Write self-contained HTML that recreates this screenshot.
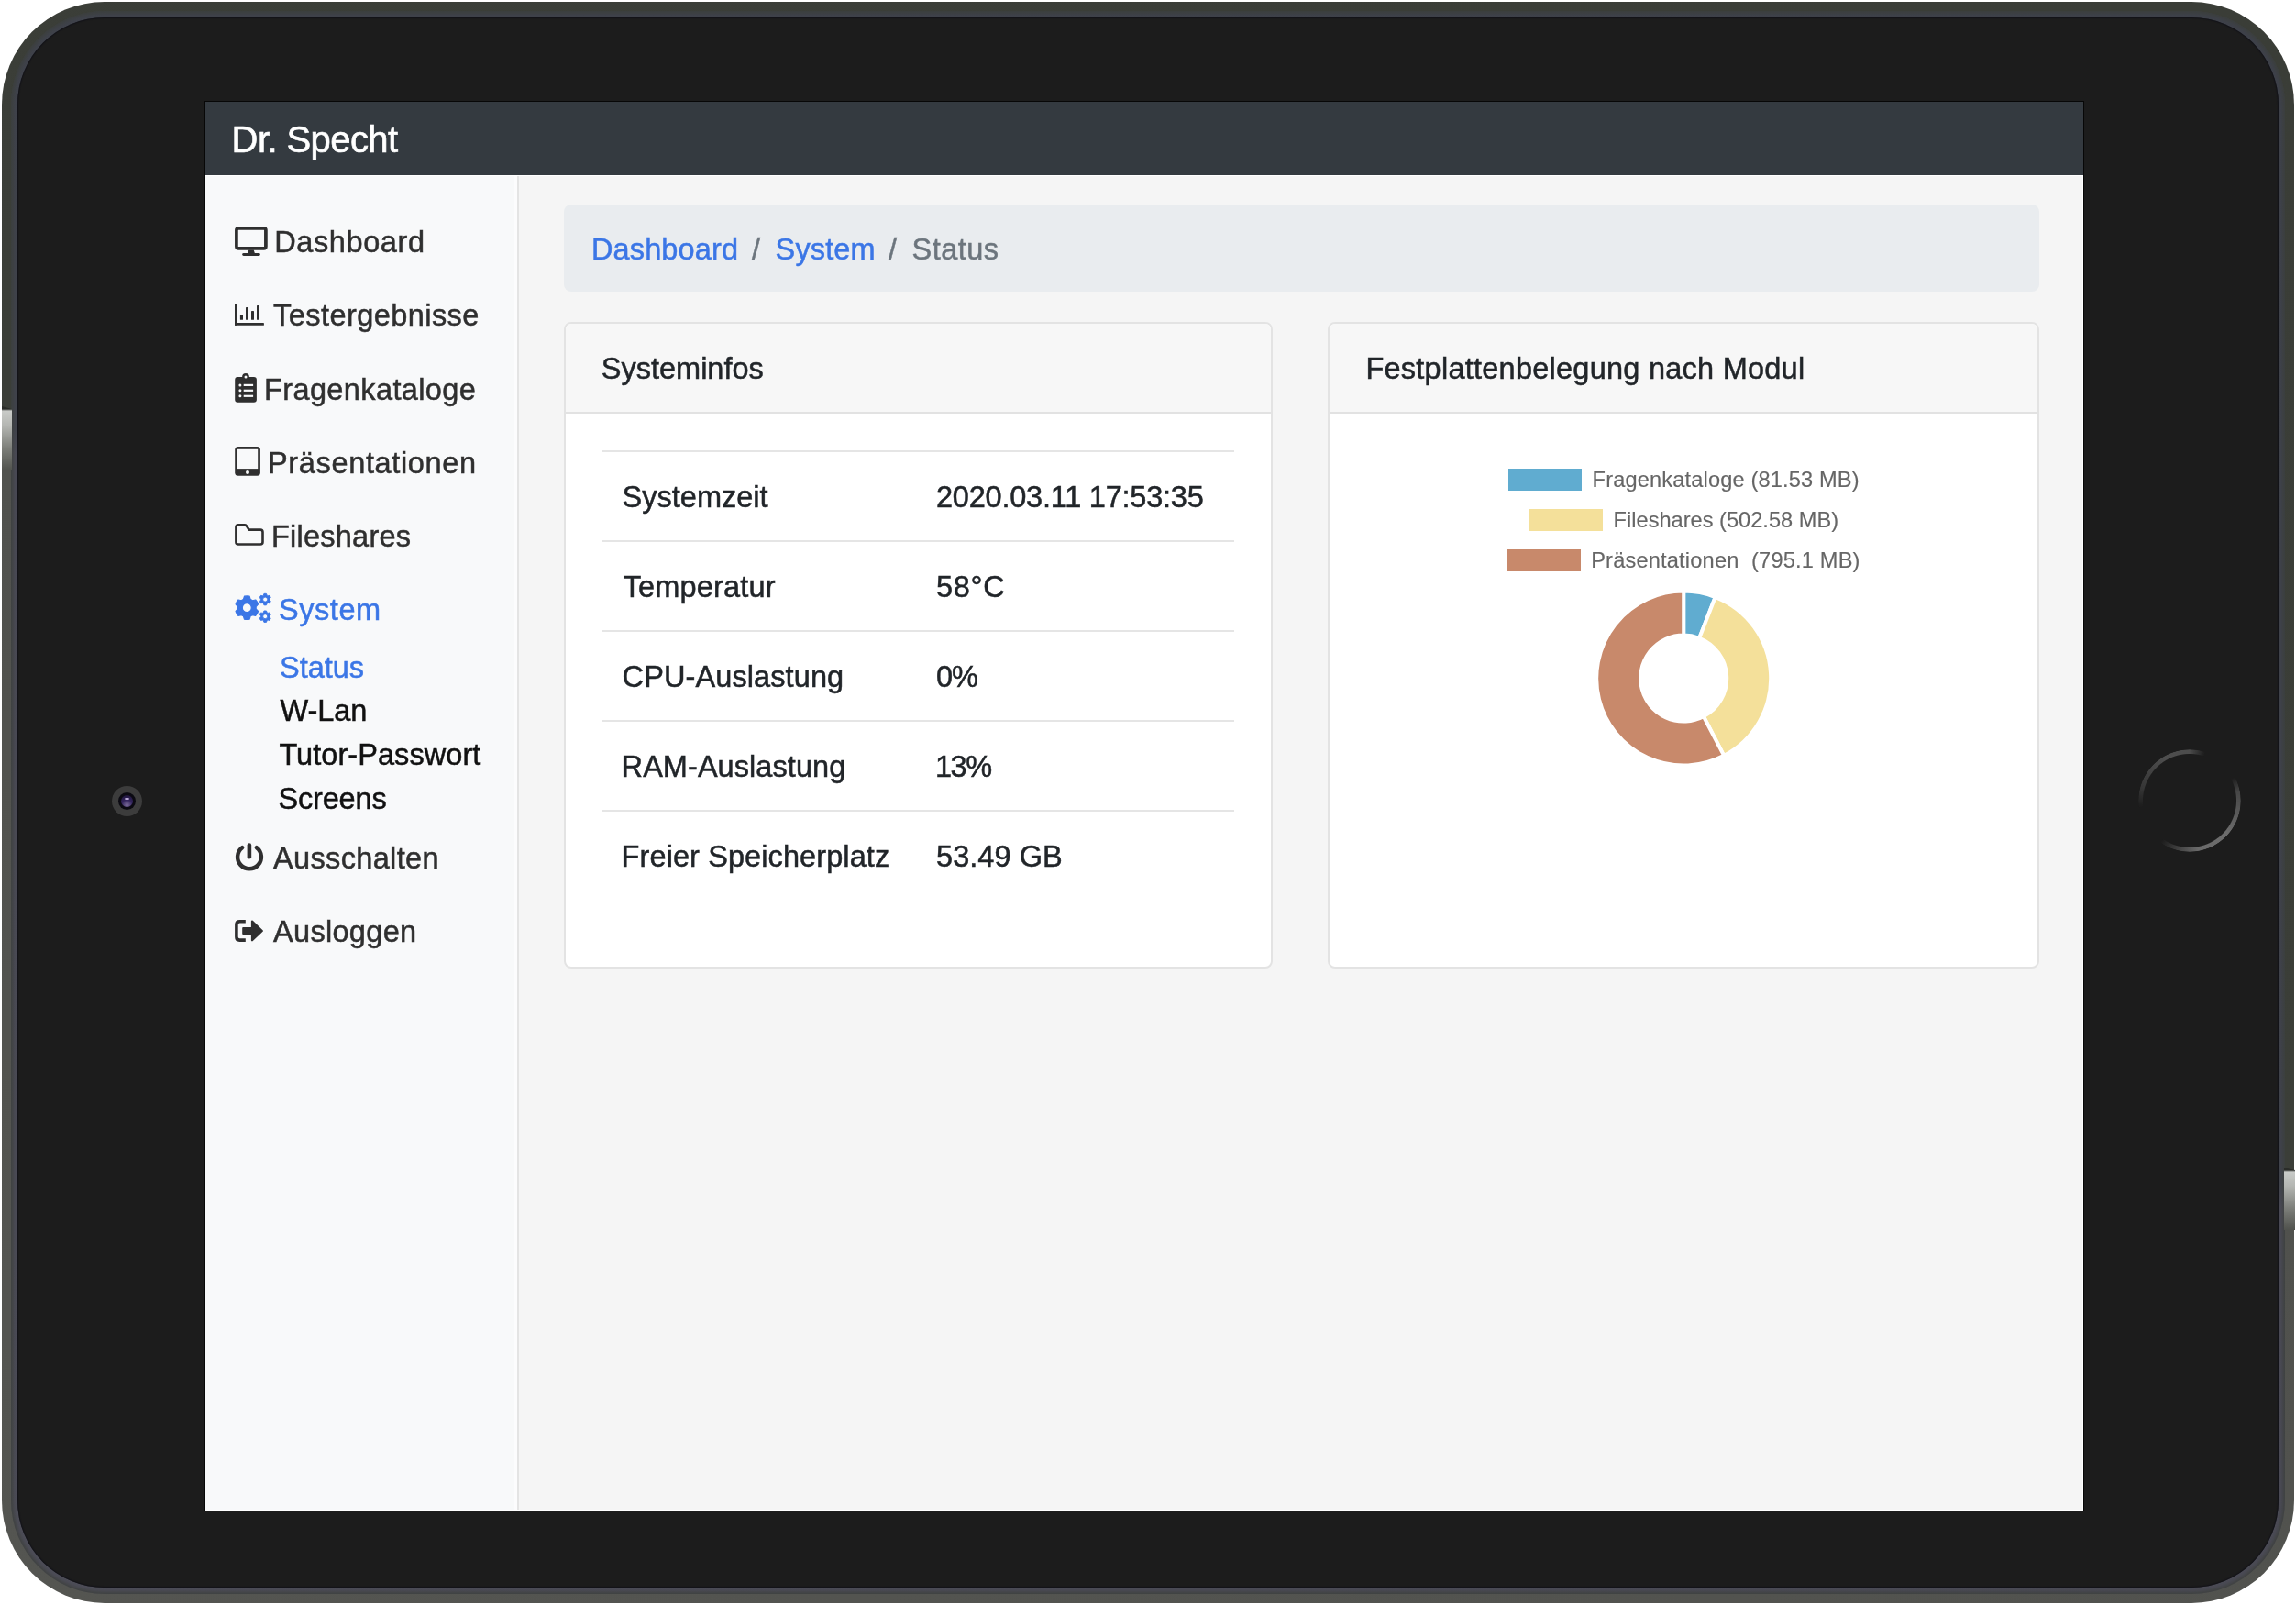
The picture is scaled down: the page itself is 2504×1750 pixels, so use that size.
<!DOCTYPE html>
<html><head><meta charset="utf-8">
<style>
html,body{margin:0;padding:0;}
body{width:2504px;height:1750px;position:relative;overflow:hidden;background:#fff;font-family:"Liberation Sans", sans-serif;}
.a{position:absolute;}
.t{position:absolute;white-space:pre;font-family:"Liberation Sans", sans-serif;}
</style></head><body>

<div class="a" style="left:2px;top:2px;width:2500px;height:1746px;border-radius:112px;background:linear-gradient(198.4deg,#3a3d37 0%,#3b3e38 50.2%,#50514d 51.2%,#545551 100%);"></div>
<div class="a" style="left:12px;top:12px;width:2480px;height:1726px;border-radius:102px;background:linear-gradient(198.4deg,#3e414a 0%,#40434c 50.2%,#4a4a55 51.2%,#4d4d58 100%);box-shadow:inset 0 0 4px 2px rgba(59,62,56,0.85);"></div>
<div class="a" style="left:19px;top:19px;width:2466px;height:1712px;border-radius:95px;background:#1c1c1c;box-shadow:inset 0 0 1px 1px rgba(18,18,24,0.9);"></div>
<div class="a" style="left:2px;top:443px;width:11px;height:70px;clip-path:polygon(0 0,100% 3px,100% 100%,0 100%);background:linear-gradient(to bottom,#2a2c28 0px,#2a2c28 3px,#c9cbc8 5px,#b4b6b2 30%,#7d7f7a 65%,#50524d 100%);"></div>
<div class="a" style="left:2491px;top:1273px;width:12px;height:68px;clip-path:polygon(0 0,100% 3px,100% 100%,0 100%);background:linear-gradient(to bottom,#2a2c28 0px,#2a2c28 3px,#c9cbc8 5px,#b4b6b2 30%,#7d7f7a 65%,#50524d 100%);"></div>
<div class="a" style="left:2332px;top:817px;width:112px;height:112px;border-radius:50%;
 background:conic-gradient(from 0deg, rgba(76,76,76,1) 0deg, rgba(76,76,76,0) 18deg, rgba(0,0,0,0) 62deg, rgba(100,100,100,0.6) 80deg, #6c6c6c 130deg, #6a6a6a 170deg, rgba(100,100,100,0) 215deg, rgba(0,0,0,0) 262deg, rgba(72,72,72,0.6) 285deg, #4e4e4e 330deg, rgba(76,76,76,1) 360deg);
 -webkit-mask:radial-gradient(circle closest-side, transparent 50.5px, #000 51.5px, #000 55.2px, transparent 56.2px);mask:radial-gradient(circle closest-side, transparent 50.5px, #000 51.5px, #000 55.2px, transparent 56.2px);"></div>
<div class="a" style="left:122px;top:857px;width:33px;height:33px;border-radius:50%;background:#3c3c3c;"></div>
<div class="a" style="left:129px;top:864px;width:19px;height:19px;border-radius:50%;background:#0b0a12;"></div>
<div class="a" style="left:132px;top:867px;width:13px;height:13px;border-radius:50%;background:radial-gradient(circle at 50% 85%, #7d6d9c 0%, #34255e 45%, #1a1133 100%);"></div>
<div class="a" style="left:136px;top:870px;width:5px;height:2px;border-radius:50%;background:#cdbdea;"></div>

<div class="a" style="left:223px;top:110px;width:2050px;height:1538px;background:#070707;"></div>
<div class="a" style="left:224px;top:111px;width:2048px;height:1536px;background:#f5f5f5;overflow:hidden;"></div>
<div class="a" style="left:224px;top:111px;width:2048px;height:80px;background:#343a40;"></div>
<div class="a" style="left:224px;top:191px;width:2048px;height:1px;background:#ffffff;"></div>
<div class="a" style="left:224px;top:192px;width:340px;height:1455px;background:#f8f9fa;"></div>
<div class="a" style="left:561px;top:192px;width:3px;height:1455px;background:#fcfcfd;"></div>
<div class="a" style="left:564px;top:192px;width:2px;height:1455px;background:#e4e4e4;"></div>
<div class="a" style="left:2271px;top:192px;width:1px;height:1455px;background:#ffffff;"></div>
<div class="a" style="left:224px;top:1646px;width:2048px;height:1px;background:#ffffff;"></div>
<div class="a" style="left:615px;top:223px;width:1609px;height:95px;border-radius:8px;background:#e9ecef;"></div>

<div class="a" style="left:615px;top:351px;width:769px;height:701px;border:2px solid #e3e3e3;border-radius:8px;background:#fff;overflow:hidden;">
  <div class="a" style="left:0;top:0;width:100%;height:96px;background:#f7f7f7;border-bottom:2px solid #e2e2e2;"></div>
</div>
<div class="a" style="left:1448px;top:351px;width:772px;height:701px;border:2px solid #e3e3e3;border-radius:8px;background:#fff;overflow:hidden;">
  <div class="a" style="left:0;top:0;width:100%;height:96px;background:#f7f7f7;border-bottom:2px solid #e2e2e2;"></div>
</div><div class="a" style="left:656px;top:491px;width:690px;height:2px;background:#e5e5e5;"></div>
<div class="a" style="left:656px;top:589px;width:690px;height:2px;background:#e5e5e5;"></div>
<div class="a" style="left:656px;top:687px;width:690px;height:2px;background:#e5e5e5;"></div>
<div class="a" style="left:656px;top:785px;width:690px;height:2px;background:#e5e5e5;"></div>
<div class="a" style="left:656px;top:883px;width:690px;height:2px;background:#e5e5e5;"></div>
<div class="a" style="left:1645px;top:511px;width:80px;height:24px;background:#60acd0;"></div>
<div class="a" style="left:1668px;top:555px;width:80px;height:24px;background:#f4e09a;"></div>
<div class="a" style="left:1644px;top:599px;width:80px;height:24px;background:#c8896b;"></div>
<svg class="a" style="left:0;top:0" width="2504" height="1750" viewBox="0 0 2504 1750"><rect x="257.9" y="248.85" width="32" height="22" rx="2.2" fill="none" stroke="#2f2f2f" stroke-width="3.7"/><path d="M271.3 272.5 L276.7 272.5 L278 276.5 L270 276.5 Z" fill="#2f2f2f"/><rect x="264.2" y="276.1" width="19.6" height="2.8" rx="1.4" fill="#2f2f2f"/><rect x="256" y="331" width="2.80" height="23.80" rx="0.6" fill="#2f2f2f"/><rect x="256" y="352.1" width="31.90" height="2.70" rx="0.6" fill="#2f2f2f"/><rect x="261.9" y="343.1" width="3.10" height="5.70" rx="0.6" fill="#2f2f2f"/><rect x="268" y="335" width="3.00" height="13.80" rx="0.6" fill="#2f2f2f"/><rect x="274" y="339" width="3.00" height="9.80" rx="0.6" fill="#2f2f2f"/><rect x="280" y="333" width="2.90" height="15.80" rx="0.6" fill="#2f2f2f"/><rect x="256.2" y="411" width="23.7" height="27.8" rx="3" fill="#2f2f2f"/><circle cx="268" cy="410.9" r="3.9" fill="#2f2f2f"/><circle cx="268" cy="410.9" r="1.5" fill="#f8f9fa"/><circle cx="261.9" cy="419.9" r="1.5" fill="#f8f9fa"/><rect x="265.7" y="418.80" width="10.4" height="2.2" fill="#f8f9fa"/><circle cx="261.9" cy="425.8" r="1.5" fill="#f8f9fa"/><rect x="265.7" y="424.70" width="10.4" height="2.2" fill="#f8f9fa"/><circle cx="261.9" cy="431.8" r="1.5" fill="#f8f9fa"/><rect x="265.7" y="430.70" width="10.4" height="2.2" fill="#f8f9fa"/><rect x="256.2" y="486.9" width="27.7" height="31.9" rx="3.5" fill="#2f2f2f"/><rect x="259" y="489.8" width="22.2" height="21.3" fill="#f8f9fa"/><circle cx="270" cy="514.9" r="2" fill="#f8f9fa"/><path d="M259.9 572.4 L266.8 572.4 Q268 572.4 268.8 573.3 L271.6 577.6 L284 577.6 Q286.5 577.6 286.5 580.1 L286.5 591 Q286.5 593.5 284 593.5 L259.9 593.5 Q257.4 593.5 257.4 591 L257.4 574.9 Q257.4 572.4 259.9 572.4 Z" fill="none" stroke="#2f2f2f" stroke-width="2.6" stroke-linejoin="round"/><path d="M265.40 653.60 L266.50 650.21 A12.8 12.8 0 0 1 272.10 650.21 L273.20 653.60 A9.9 9.9 0 0 1 275.23 654.77 L278.72 654.03 A12.8 12.8 0 0 1 281.52 658.88 L279.13 661.53 A9.9 9.9 0 0 1 279.13 663.87 L281.52 666.52 A12.8 12.8 0 0 1 278.72 671.37 L275.23 670.63 A9.9 9.9 0 0 1 273.20 671.80 L272.10 675.19 A12.8 12.8 0 0 1 266.50 675.19 L265.40 671.80 A9.9 9.9 0 0 1 263.37 670.63 L259.88 671.37 A12.8 12.8 0 0 1 257.08 666.52 L259.47 663.87 A9.9 9.9 0 0 1 259.47 661.53 L257.08 658.88 A12.8 12.8 0 0 1 259.88 654.03 L263.37 654.77 A9.9 9.9 0 0 1 265.40 653.60 Z M274.30 662.70 A5.0 5.0 0 1 0 264.30 662.70 A5.0 5.0 0 1 0 274.30 662.70 Z" fill="#3b76e6" fill-rule="evenodd" stroke="#3b76e6" stroke-width="1.2" stroke-linejoin="round"/><path d="M287.35 649.17 L287.85 647.45 A6.3 6.3 0 0 1 290.55 647.45 L291.05 649.17 A4.8 4.8 0 0 1 292.11 649.78 L293.85 649.35 A6.3 6.3 0 0 1 295.20 651.69 L293.96 652.99 A4.8 4.8 0 0 1 293.96 654.21 L295.20 655.51 A6.3 6.3 0 0 1 293.85 657.85 L292.11 657.42 A4.8 4.8 0 0 1 291.05 658.03 L290.55 659.75 A6.3 6.3 0 0 1 287.85 659.75 L287.35 658.03 A4.8 4.8 0 0 1 286.29 657.42 L284.55 657.85 A6.3 6.3 0 0 1 283.20 655.51 L284.44 654.21 A4.8 4.8 0 0 1 284.44 652.99 L283.20 651.69 A6.3 6.3 0 0 1 284.55 649.35 L286.29 649.78 A4.8 4.8 0 0 1 287.35 649.17 Z M291.70 653.60 A2.5 2.5 0 1 0 286.70 653.60 A2.5 2.5 0 1 0 291.70 653.60 Z" fill="#3b76e6" fill-rule="evenodd" stroke="#3b76e6" stroke-width="0.9" stroke-linejoin="round"/><path d="M287.35 667.77 L287.85 666.05 A6.3 6.3 0 0 1 290.55 666.05 L291.05 667.77 A4.8 4.8 0 0 1 292.11 668.38 L293.85 667.95 A6.3 6.3 0 0 1 295.20 670.29 L293.96 671.59 A4.8 4.8 0 0 1 293.96 672.81 L295.20 674.11 A6.3 6.3 0 0 1 293.85 676.45 L292.11 676.02 A4.8 4.8 0 0 1 291.05 676.63 L290.55 678.35 A6.3 6.3 0 0 1 287.85 678.35 L287.35 676.63 A4.8 4.8 0 0 1 286.29 676.02 L284.55 676.45 A6.3 6.3 0 0 1 283.20 674.11 L284.44 672.81 A4.8 4.8 0 0 1 284.44 671.59 L283.20 670.29 A6.3 6.3 0 0 1 284.55 667.95 L286.29 668.38 A4.8 4.8 0 0 1 287.35 667.77 Z M291.70 672.20 A2.5 2.5 0 1 0 286.70 672.20 A2.5 2.5 0 1 0 291.70 672.20 Z" fill="#3b76e6" fill-rule="evenodd" stroke="#3b76e6" stroke-width="0.9" stroke-linejoin="round"/><path d="M264.09 924.21 A12.9 12.9 0 1 0 279.91 924.21" fill="none" stroke="#2f2f2f" stroke-width="4.5" stroke-linecap="round"/><line x1="271.9" y1="921.6" x2="271.9" y2="934.2" stroke="#2f2f2f" stroke-width="4.6" stroke-linecap="round"/><path d="M267.8 1003 L261.3 1003 Q256.1 1003 256.1 1008.2 L256.1 1021.7 Q256.1 1026.9 261.3 1026.9 L267.8 1026.9 L267.8 1023.3 L261.5 1023.3 Q259.7 1023.3 259.7 1021.5 L259.7 1008.4 Q259.7 1006.6 261.5 1006.6 L267.8 1006.6 Z" fill="#2f2f2f"/><rect x="264.2" y="1011" width="11" height="8" rx="1" fill="#2f2f2f"/><path d="M275 1004.5 L285.8 1015 L275 1025.3 Z" fill="#2f2f2f" stroke="#2f2f2f" stroke-width="2.2" stroke-linejoin="round"/><path d="M1836.20 644.60 A95 95 0 0 1 1870.68 651.08 L1853.26 695.80 A47 47 0 0 0 1836.20 692.60 Z" fill="#60acd0" stroke="#fff" stroke-width="4" stroke-linejoin="miter"/><path d="M1870.68 651.08 A95 95 0 0 1 1880.12 823.84 L1857.93 781.28 A47 47 0 0 0 1853.26 695.80 Z" fill="#f4e09a" stroke="#fff" stroke-width="4" stroke-linejoin="miter"/><path d="M1880.12 823.84 A95 95 0 1 1 1836.20 644.60 L1836.20 692.60 A47 47 0 1 0 1857.93 781.28 Z" fill="#c8896b" stroke="#fff" stroke-width="4" stroke-linejoin="miter"/></svg>
<div class="a" style="left:0;top:0;width:2504px;height:1750px;will-change:transform;"><div class="t" style="left:252.60px;top:127.34px;font-size:40px;line-height:50px;letter-spacing:-0.578px;color:#ffffff;-webkit-text-stroke:0.62px #ffffff">Dr. Specht</div>
<div class="t" style="left:299.20px;top:244.44px;font-size:32.5px;line-height:41px;letter-spacing:0.600px;color:#2f2f2f;-webkit-text-stroke:0.50px #2f2f2f">Dashboard</div>
<div class="t" style="left:298.00px;top:323.64px;font-size:32.5px;line-height:41px;letter-spacing:0.446px;color:#2f2f2f;-webkit-text-stroke:0.50px #2f2f2f">Testergebnisse</div>
<div class="t" style="left:288.00px;top:404.74px;font-size:32.5px;line-height:41px;letter-spacing:0.385px;color:#2f2f2f;-webkit-text-stroke:0.50px #2f2f2f">Fragenkataloge</div>
<div class="t" style="left:292.00px;top:484.74px;font-size:32.5px;line-height:41px;letter-spacing:0.654px;color:#2f2f2f;-webkit-text-stroke:0.50px #2f2f2f">Präsentationen</div>
<div class="t" style="left:296.00px;top:564.74px;font-size:32.5px;line-height:41px;letter-spacing:0.233px;color:#2f2f2f;-webkit-text-stroke:0.50px #2f2f2f">Fileshares</div>
<div class="t" style="left:304.00px;top:644.54px;font-size:32.5px;line-height:41px;letter-spacing:0.560px;color:#3b76e6;-webkit-text-stroke:0.50px #3b76e6">System</div>
<div class="t" style="left:305.00px;top:707.54px;font-size:32.5px;line-height:41px;letter-spacing:-0.020px;color:#3b76e6;-webkit-text-stroke:0.50px #3b76e6">Status</div>
<div class="t" style="left:305.60px;top:755.34px;font-size:32.5px;line-height:41px;letter-spacing:-0.075px;color:#111111;-webkit-text-stroke:0.50px #111111">W-Lan</div>
<div class="t" style="left:304.40px;top:803.34px;font-size:32.5px;line-height:41px;letter-spacing:0.062px;color:#111111;-webkit-text-stroke:0.50px #111111">Tutor-Passwort</div>
<div class="t" style="left:303.40px;top:851.34px;font-size:32.5px;line-height:41px;letter-spacing:-0.150px;color:#111111;-webkit-text-stroke:0.50px #111111">Screens</div>
<div class="t" style="left:298.00px;top:915.74px;font-size:32.5px;line-height:41px;letter-spacing:0.350px;color:#2f2f2f;-webkit-text-stroke:0.50px #2f2f2f">Ausschalten</div>
<div class="t" style="left:298.00px;top:996.04px;font-size:32.5px;line-height:41px;letter-spacing:0.312px;color:#2f2f2f;-webkit-text-stroke:0.50px #2f2f2f">Ausloggen</div>
<div class="t" style="left:645.00px;top:252.04px;font-size:32.5px;line-height:41px;letter-spacing:0.125px;color:#3b76e6;-webkit-text-stroke:0.50px #3b76e6">Dashboard</div>
<div class="t" style="left:820.00px;top:252.04px;font-size:32.5px;line-height:41px;letter-spacing:0.000px;color:#6c757d;-webkit-text-stroke:0.50px #6c757d">/</div>
<div class="t" style="left:845.60px;top:252.04px;font-size:32.5px;line-height:41px;letter-spacing:0.140px;color:#3b76e6;-webkit-text-stroke:0.50px #3b76e6">System</div>
<div class="t" style="left:969.00px;top:252.04px;font-size:32.5px;line-height:41px;letter-spacing:0.000px;color:#6c757d;-webkit-text-stroke:0.50px #6c757d">/</div>
<div class="t" style="left:994.60px;top:252.04px;font-size:32.5px;line-height:41px;letter-spacing:0.440px;color:#6c757d;-webkit-text-stroke:0.50px #6c757d">Status</div>
<div class="t" style="left:655.80px;top:382.04px;font-size:32.5px;line-height:41px;letter-spacing:0.000px;color:#212529;-webkit-text-stroke:0.50px #212529">Systeminfos</div>
<div class="t" style="left:1489.40px;top:382.04px;font-size:32.5px;line-height:41px;letter-spacing:0.248px;color:#212529;-webkit-text-stroke:0.50px #212529">Festplattenbelegung nach Modul</div>
<div class="t" style="left:678.60px;top:522.04px;font-size:32.5px;line-height:41px;letter-spacing:0.000px;color:#212529;-webkit-text-stroke:0.50px #212529">Systemzeit</div>
<div class="t" style="left:1021.00px;top:522.04px;font-size:32.5px;line-height:41px;letter-spacing:-0.222px;color:#212529;-webkit-text-stroke:0.50px #212529">2020.03.11 17:53:35</div>
<div class="t" style="left:679.60px;top:620.34px;font-size:32.5px;line-height:41px;letter-spacing:0.178px;color:#212529;-webkit-text-stroke:0.50px #212529">Temperatur</div>
<div class="t" style="left:1021.00px;top:620.34px;font-size:32.5px;line-height:41px;letter-spacing:0.667px;color:#212529;-webkit-text-stroke:0.50px #212529">58°C</div>
<div class="t" style="left:678.60px;top:717.54px;font-size:32.5px;line-height:41px;letter-spacing:0.100px;color:#212529;-webkit-text-stroke:0.50px #212529">CPU-Auslastung</div>
<div class="t" style="left:1021.00px;top:717.54px;font-size:32.5px;line-height:41px;letter-spacing:-1.000px;color:#212529;-webkit-text-stroke:0.50px #212529">0%</div>
<div class="t" style="left:677.60px;top:815.84px;font-size:32.5px;line-height:41px;letter-spacing:0.062px;color:#212529;-webkit-text-stroke:0.50px #212529">RAM-Auslastung</div>
<div class="t" style="left:1020.00px;top:815.84px;font-size:32.5px;line-height:41px;letter-spacing:-1.500px;color:#212529;-webkit-text-stroke:0.50px #212529">13%</div>
<div class="t" style="left:677.60px;top:913.84px;font-size:32.5px;line-height:41px;letter-spacing:0.095px;color:#212529;-webkit-text-stroke:0.50px #212529">Freier Speicherplatz</div>
<div class="t" style="left:1021.00px;top:913.84px;font-size:32.5px;line-height:41px;letter-spacing:0.057px;color:#212529;-webkit-text-stroke:0.50px #212529">53.49 GB</div>
<div class="t" style="left:1736.60px;top:508.22px;font-size:23.6px;line-height:30px;letter-spacing:0.154px;color:#666666;-webkit-text-stroke:0.15px #666666">Fragenkataloge (81.53 MB)</div>
<div class="t" style="left:1759.60px;top:551.92px;font-size:23.6px;line-height:30px;letter-spacing:0.010px;color:#666666;-webkit-text-stroke:0.15px #666666">Fileshares (502.58 MB)</div>
<div class="t" style="left:1735.20px;top:595.62px;font-size:23.6px;line-height:30px;letter-spacing:0.188px;color:#666666;-webkit-text-stroke:0.15px #666666">Präsentationen  (795.1 MB)</div></div>
</body></html>
